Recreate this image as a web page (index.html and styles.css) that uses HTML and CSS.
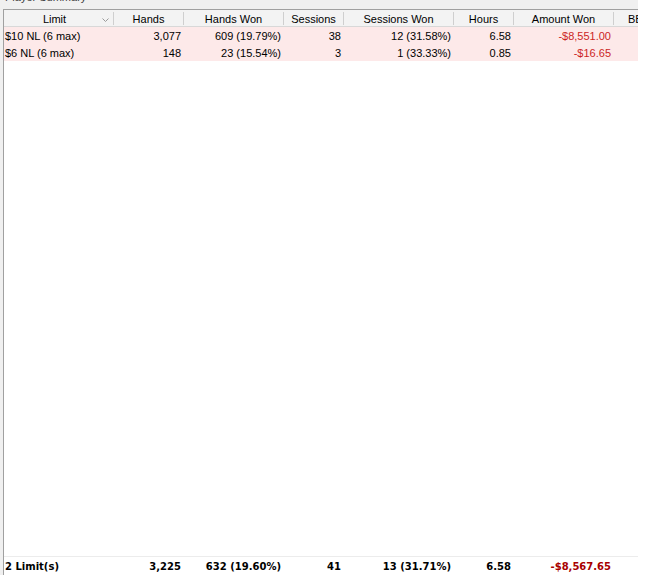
FILE: index.html
```html
<!DOCTYPE html>
<html>
<head>
<meta charset="utf-8">
<link rel="stylesheet" href="styles.css">
</head>
<body>
<div class="panel">
  <div class="caption"><span>Player Summary</span></div>
  <div class="grid">
    <div class="row head">
      <div class="hc c-limit"><span class="ht">Limit</span><svg class="sort" width="7" height="4" viewBox="0 0 7 4"><path d="M0.5 0.5 L3.5 3.5 L6.5 0.5" fill="none" stroke="#9a9a9a" stroke-width="1"/></svg></div>
      <div class="hc">Hands</div>
      <div class="hc">Hands Won</div>
      <div class="hc">Sessions</div>
      <div class="hc">Sessions Won</div>
      <div class="hc">Hours</div>
      <div class="hc">Amount Won</div>
      <div class="hc last">BB/100</div>
    </div>
    <div class="row data">
      <div class="c l">$10 NL (6 max)</div>
      <div class="c">3,077</div>
      <div class="c">609 (19.79%)</div>
      <div class="c">38</div>
      <div class="c">12 (31.58%)</div>
      <div class="c">6.58</div>
      <div class="c neg">-$8,551.00</div>
      <div class="c"></div>
    </div>
    <div class="row data">
      <div class="c l">$6 NL (6 max)</div>
      <div class="c">148</div>
      <div class="c">23 (15.54%)</div>
      <div class="c">3</div>
      <div class="c">1 (33.33%)</div>
      <div class="c">0.85</div>
      <div class="c neg">-$16.65</div>
      <div class="c"></div>
    </div>
    <div class="fill"></div>
    <div class="row foot">
      <div class="c l">2 Limit(s)</div>
      <div class="c">3,225</div>
      <div class="c">632 (19.60%)</div>
      <div class="c">41</div>
      <div class="c">13 (31.71%)</div>
      <div class="c">6.58</div>
      <div class="c neg">-$8,567.65</div>
      <div class="c"></div>
    </div>
  </div>
</div>
</body>
</html>
```
FILE: styles.css
```css
html, body {
  margin: 0;
  padding: 0;
  background: #ffffff;
}
body {
  font-family: "Liberation Sans", Arial, sans-serif;
  font-size: 11px;
  color: #000;
  width: 665px;
  height: 575px;
  overflow: hidden;
}
.panel {
  width: 638px;
  height: 575px;
  background: #f0f0f0;
  display: flex;
  flex-direction: column;
}
.caption {
  height: 9px;
  overflow: hidden;
}
.caption span {
  display: block;
  margin-top: -9px;
  padding-left: 5px;
  line-height: 13px;
  color: #404040;
}
.grid {
  flex: 1;
  margin-left: 3px;
  border-left: 1px solid #a0a0a0;
  border-top: 1px solid #a0a0a0;
  background: #fff;
  display: flex;
  flex-direction: column;
  overflow: hidden;
}
.row {
  display: grid;
  grid-template-columns: 110px 70px 100px 60px 110px 60px 100px 24px;
  height: 17px;
}
.head {
  background: #f3f3f3;
  border-bottom: 1px solid #d8d8d8;
  height: 16px;
}
.hc {
  display: flex;
  align-items: center;
  justify-content: center;
  margin: 2px 0 1px;
  border-right: 1px solid #cfcfcf;
  color: #000;
  white-space: nowrap;
  overflow: hidden;
}
.hc.last {
  border-right: none;
  justify-content: flex-start;
  padding-left: 14px;
}
.c-limit {
  position: relative;
}
.c-limit .ht {
  margin-left: -8px;
}
.sort {
  position: absolute;
  right: 4px;
  top: 6px;
}
.data {
  background: #fde9e9;
}
.c {
  display: flex;
  align-items: center;
  justify-content: flex-end;
  padding-right: 3px;
  white-space: nowrap;
  overflow: hidden;
}
.c.l {
  justify-content: flex-start;
  padding-left: 1px;
}
.data .neg {
  color: #cc1f1f;
}
.fill {
  flex: 1;
}
.foot {
  border-top: 1px solid #ececec;
  font-family: "DejaVu Sans", Verdana, sans-serif;
  font-size: 10px;
  font-weight: bold;
  height: 18px;
}
.foot .neg {
  color: #a80000;
}
```
